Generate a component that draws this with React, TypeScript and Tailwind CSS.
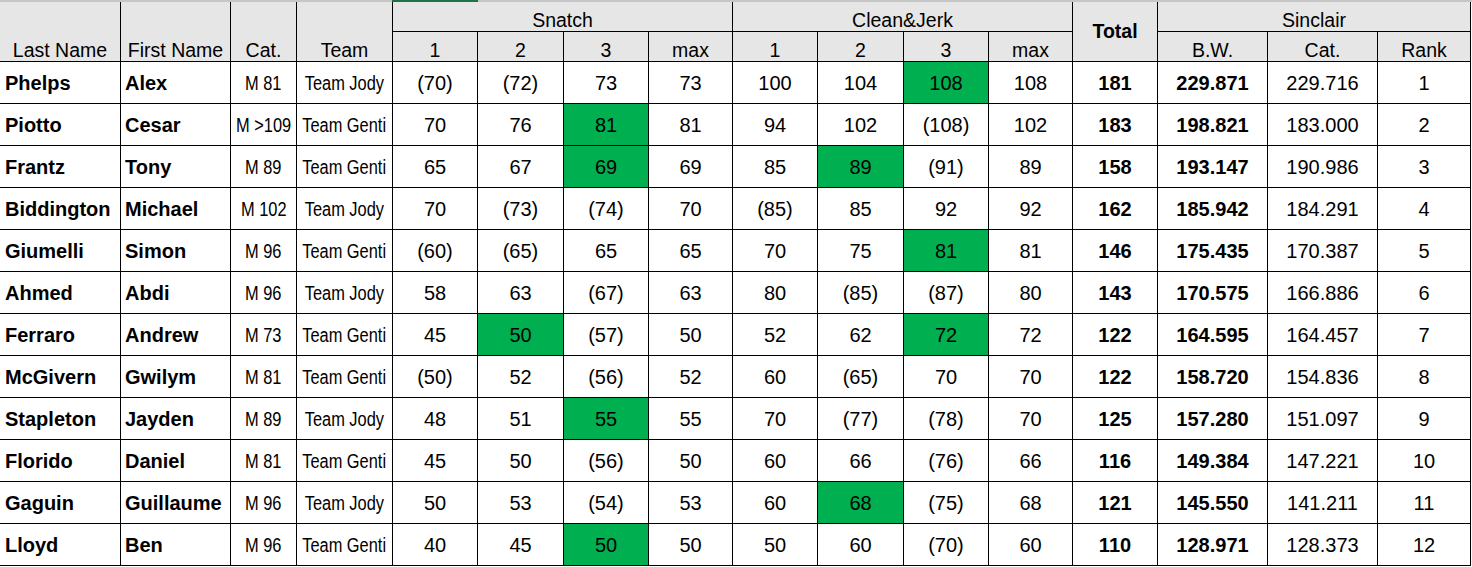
import React from 'react';

// one athlete per row; a green attempt is the lift that counted for the best total
interface Lifter {
  last: string;
  first: string;
  cat: string;
  team: string;
  snatch: string[];
  cj: string[];
  total: number;
  bw: string;
  sCat: string;
  rank: number;
  green: number[]; // indexes into the 8 attempt cells
}

const lifters: Lifter[] = [
  { last: 'Phelps', first: 'Alex', cat: 'M 81', team: 'Team Jody', snatch: ['(70)', '(72)', '73', '73'], cj: ['100', '104', '108', '108'], total: 181, bw: '229.871', sCat: '229.716', rank: 1, green: [6] },
  { last: 'Piotto', first: 'Cesar', cat: 'M >109', team: 'Team Genti', snatch: ['70', '76', '81', '81'], cj: ['94', '102', '(108)', '102'], total: 183, bw: '198.821', sCat: '183.000', rank: 2, green: [2] },
  { last: 'Frantz', first: 'Tony', cat: 'M 89', team: 'Team Genti', snatch: ['65', '67', '69', '69'], cj: ['85', '89', '(91)', '89'], total: 158, bw: '193.147', sCat: '190.986', rank: 3, green: [2, 5] },
  { last: 'Biddington', first: 'Michael', cat: 'M 102', team: 'Team Jody', snatch: ['70', '(73)', '(74)', '70'], cj: ['(85)', '85', '92', '92'], total: 162, bw: '185.942', sCat: '184.291', rank: 4, green: [] },
  { last: 'Giumelli', first: 'Simon', cat: 'M 96', team: 'Team Genti', snatch: ['(60)', '(65)', '65', '65'], cj: ['70', '75', '81', '81'], total: 146, bw: '175.435', sCat: '170.387', rank: 5, green: [6] },
  { last: 'Ahmed', first: 'Abdi', cat: 'M 96', team: 'Team Jody', snatch: ['58', '63', '(67)', '63'], cj: ['80', '(85)', '(87)', '80'], total: 143, bw: '170.575', sCat: '166.886', rank: 6, green: [] },
  { last: 'Ferraro', first: 'Andrew', cat: 'M 73', team: 'Team Genti', snatch: ['45', '50', '(57)', '50'], cj: ['52', '62', '72', '72'], total: 122, bw: '164.595', sCat: '164.457', rank: 7, green: [1, 6] },
  { last: 'McGivern', first: 'Gwilym', cat: 'M 81', team: 'Team Genti', snatch: ['(50)', '52', '(56)', '52'], cj: ['60', '(65)', '70', '70'], total: 122, bw: '158.720', sCat: '154.836', rank: 8, green: [] },
  { last: 'Stapleton', first: 'Jayden', cat: 'M 89', team: 'Team Jody', snatch: ['48', '51', '55', '55'], cj: ['70', '(77)', '(78)', '70'], total: 125, bw: '157.280', sCat: '151.097', rank: 9, green: [2] },
  { last: 'Florido', first: 'Daniel', cat: 'M 81', team: 'Team Genti', snatch: ['45', '50', '(56)', '50'], cj: ['60', '66', '(76)', '66'], total: 116, bw: '149.384', sCat: '147.221', rank: 10, green: [] },
  { last: 'Gaguin', first: 'Guillaume', cat: 'M 96', team: 'Team Jody', snatch: ['50', '53', '(54)', '53'], cj: ['60', '68', '(75)', '68'], total: 121, bw: '145.550', sCat: '141.211', rank: 11, green: [5] },
  { last: 'Lloyd', first: 'Ben', cat: 'M 96', team: 'Team Genti', snatch: ['40', '45', '50', '50'], cj: ['50', '60', '(70)', '60'], total: 110, bw: '128.971', sCat: '128.373', rank: 12, green: [2] },
];

const cell = 'border-r border-b border-black flex items-center';
const head = `${cell} bg-[#e7e6e6] justify-center items-end leading-[22px] text-[19.5px]`;

export default function App() {
  return (
    <div className="w-[1472px] h-[567px] bg-white overflow-hidden" style={{ fontFamily: '"Liberation Sans", Arial, sans-serif' }}>
      {/* top gridline strip with the selected-cell marker */}
      <div className="h-[2px] bg-[#c6c6c6] relative">
        <div className="absolute left-[392px] w-[86px] top-0 h-[2px] bg-[#217346]" />
      </div>
      <div className="grid grid-cols-[121px_110px_66px_96px_85px_86px_85px_84px_85px_86px_85px_84px_85px_110px_110px_93px] grid-rows-[30px_30px_repeat(12,42px)] text-[20px] text-black w-[1471px]">
        {/* header */}
        <div className={`${head} row-span-2`}>Last Name</div>
        <div className={`${head} row-span-2`}>First Name</div>
        <div className={`${head} row-span-2`}>Cat.</div>
        <div className={`${head} row-span-2`}>Team</div>
        <div className={`${head} col-span-4 text-[18.5px]`}>Snatch</div>
        <div className={`${head} col-span-4 text-[18.5px]`}>Clean&amp;Jerk</div>
        <div className={`${cell} row-span-2 bg-[#e7e6e6] justify-center font-bold text-[19.5px]`}>Total</div>
        <div className={`${head} col-span-3 text-[18.5px]`}>Sinclair</div>
        {['1', '2', '3', 'max', '1', '2', '3', 'max'].map((h, i) => (
          <div key={`a${i}`} className={head}>{h}</div>
        ))}
        {['B.W.', 'Cat.', 'Rank'].map((h) => (
          <div key={h} className={head}>{h}</div>
        ))}

        {/* rows */}
        {lifters.map((l) => (
          <React.Fragment key={l.last}>
            <div className={`${cell} font-bold pl-[5px]`}>{l.last}</div>
            <div className={`${cell} font-bold pl-[4px]`}>{l.first}</div>
            <div className={`${cell} justify-center whitespace-nowrap`}>
              <span className="inline-block scale-x-[0.82]">{l.cat}</span>
            </div>
            <div className={`${cell} justify-center whitespace-nowrap`}>
              <span className="inline-block scale-x-[0.82]">{l.team}</span>
            </div>
            {[...l.snatch, ...l.cj].map((v, i) => (
              <div key={i} className={`${cell} justify-center ${l.green.includes(i) ? 'bg-[#00b050]' : ''}`}>{v}</div>
            ))}
            <div className={`${cell} justify-center font-bold`}>{l.total}</div>
            <div className={`${cell} justify-center font-bold`}>{l.bw}</div>
            <div className={`${cell} justify-center`}>{l.sCat}</div>
            <div className={`${cell} justify-center`}>{l.rank}</div>
          </React.Fragment>
        ))}
      </div>
    </div>
  );
}
